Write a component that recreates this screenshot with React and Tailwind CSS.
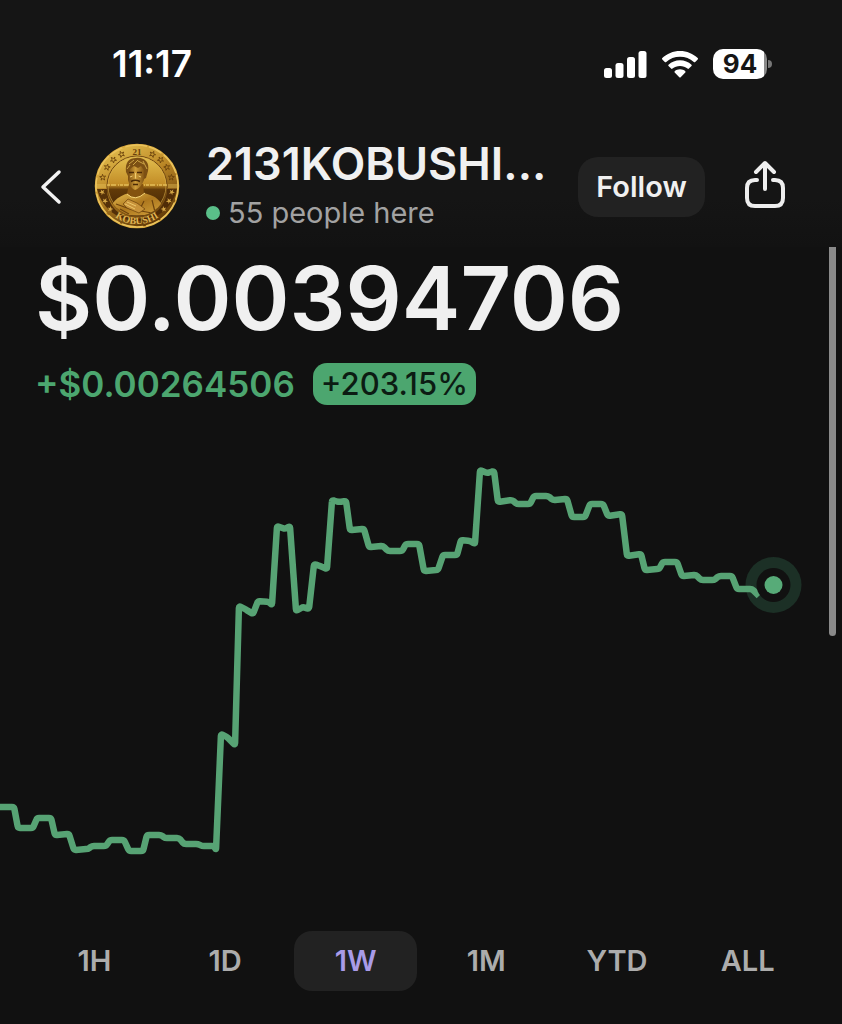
import React, { useState } from 'react';

const RANGES = ['1H', '1D', '1W', '1M', 'YTD', 'ALL'];

const POINTS = [
  [0, 807], [14, 807], [18, 828], [33, 828], [37, 818], [51, 818], [55, 835], [69, 834],
  [74, 850], [88, 849], [92, 846], [106, 846], [110, 840], [124, 840], [129, 851], [143, 851],
  [147, 835], [161, 835], [165, 838], [179, 838], [184, 844], [198, 844], [202, 846], [214, 846],
  [216, 850], [221, 734], [227, 737], [235, 745], [239, 606], [245, 609], [253, 614], [258, 601],
  [269, 602], [272, 605], [277, 526], [285, 529], [290, 526], [296, 611], [303, 607], [309, 609],
  [314, 564], [320, 566], [327, 569], [332, 500], [339, 502], [346, 501], [350, 530], [364, 529],
  [369, 547], [383, 546], [388, 551], [402, 551], [406, 544], [419, 544], [424, 571], [438, 570],
  [443, 555], [457, 555], [461, 540], [470, 541], [475, 544], [480, 470], [487, 473], [494, 471],
  [498, 502], [512, 500], [517, 504], [530, 504], [534, 496], [548, 496], [553, 500], [567, 499],
  [572, 517], [585, 517], [590, 504], [603, 504], [608, 516], [622, 514], [627, 556], [641, 554],
  [645, 570], [659, 569], [663, 562], [677, 562], [682, 576], [696, 575], [701, 580], [714, 580],
  [719, 576], [732, 576], [737, 589], [752, 589], [759, 596]
];

// Turns each corner into a short curve
const buildPath = (points, radius) => {
  const toward = ([x1, y1], [x2, y2]) => {
    const length = Math.hypot(x2 - x1, y2 - y1);
    const t = Math.min(radius, length / 2) / length;
    return `${(x1 + (x2 - x1) * t).toFixed(1)} ${(y1 + (y2 - y1) * t).toFixed(1)}`;
  };
  let d = `M${points[0].join(' ')}`;
  for (let i = 1; i < points.length - 1; i++) {
    d += `L${toward(points[i], points[i - 1])}Q${points[i].join(' ')} ${toward(points[i], points[i + 1])}`;
  }
  return `${d}L${points[points.length - 1].join(' ')}`;
};

const StatusBar = () => (
  <div className="flex h-32 items-center justify-between pl-[112px] pr-[70px]">
    <time className="text-[37px] leading-10 font-semibold text-white">11:17</time>
    <div className="flex items-center gap-[15px]">
      <svg width="43" height="27" viewBox="0 0 43 27" fill="#fff" aria-hidden="true">
        <rect x="0" y="17" width="8" height="10" rx="2.5" />
        <rect x="11.5" y="12" width="8" height="15" rx="2.5" />
        <rect x="23" y="6" width="8" height="21" rx="2.5" />
        <rect x="34.5" y="0" width="8" height="27" rx="2.5" />
      </svg>
      <svg width="36" height="27" viewBox="0 0 36 27" fill="#fff" aria-hidden="true">
        <path d="M18 0C24.900 0 31.200 2.700 35.700 7.100C36.100 7.500 36.100 8.100 35.700 8.500L33.200 11C32.800 11.400 32.200 11.400 31.800 11C28.100 7.600 23.300 5.700 18 5.700S7.900 7.600 4.200 11C3.800 11.400 3.200 11.400 2.800 11L.3 8.500C-.1 8.100-.1 7.500.3 7.100C4.800 2.700 11.100 0 18 0Z" />
        <path d="M18 9.300C22.400 9.300 26.500 11 29.500 13.700C29.900 14.100 29.900 14.700 29.500 15.100L26.900 17.600C26.500 18 25.900 18 25.500 17.600C23.500 15.900 20.900 14.900 18 14.900S12.500 15.900 10.500 17.600C10.100 18 9.500 18 9.100 17.600L6.500 15.100C6.100 14.700 6.100 14.100 6.500 13.700C9.500 11 13.600 9.300 18 9.300Z" />
        <path d="M18 18.300C20.100 18.300 21.900 19 23.300 20.200C23.700 20.600 23.700 21.200 23.300 21.600L18.700 26.300C18.300 26.700 17.700 26.700 17.300 26.300L12.700 21.600C12.300 21.200 12.300 20.600 12.700 20.200C14.100 19 15.900 18.300 18 18.300Z" />
      </svg>
      <div className="flex items-center gap-px">
        <div className="flex h-[30px] w-[54px] items-center justify-center rounded-[10px] bg-linear-to-r from-white from-94% to-[#8a8a8a] to-94% text-[26px] leading-[30px] font-bold text-[#151515]">
          94
        </div>
        <div className="h-2 w-1 rounded-r-full bg-[#777]" />
      </div>
    </div>
  </div>
);

const Coin = () => (
  <svg className="shrink-0" width="86" height="86" viewBox="0 0 86 86" role="img" aria-label="Kobushi coin">
    <defs>
      <linearGradient id="gold" x1="0.2" y1="0" x2="0.7" y2="1">
        <stop offset="0" stopColor="#e5c04f" />
        <stop offset="0.45" stopColor="#b98525" />
        <stop offset="1" stopColor="#5a3406" />
      </linearGradient>
      <linearGradient id="field" x1="0" y1="0" x2="0" y2="1">
        <stop offset="0" stopColor="#e3c050" />
        <stop offset="0.48" stopColor="#c28c26" />
        <stop offset="0.56" stopColor="#623a08" />
        <stop offset="1" stopColor="#3d2105" />
      </linearGradient>
      <linearGradient id="shirt" x1="0" y1="0" x2="1" y2="1">
        <stop offset="0" stopColor="#e8c052" />
        <stop offset="0.5" stopColor="#ad771e" />
        <stop offset="1" stopColor="#d2a23c" />
      </linearGradient>
      <linearGradient id="skin" x1="0" y1="0" x2="1" y2="0">
        <stop offset="0" stopColor="#7a4d10" />
        <stop offset="0.45" stopColor="#cf9d3a" />
        <stop offset="1" stopColor="#7a4d10" />
      </linearGradient>
      <path id="legend" d="M10 62A38 38 0 0 0 76 62" />
      <clipPath id="face">
        <circle cx="43" cy="43" r="30" />
      </clipPath>
    </defs>
    <circle cx="43" cy="43" r="41.500" fill="url(#gold)" stroke="#d9a73a" strokeWidth="1.500" />
    <path d="M3 46A41 41 0 0 0 83 46L73 46A30 30 0 0 1 13 46Z" fill="#4b2907" opacity="0.9" />
    <circle cx="43" cy="43" r="41" fill="none" stroke="#eac35c" strokeWidth="1.500" strokeDasharray="14 3 22 2" />
    <circle cx="43" cy="43" r="30" fill="url(#field)" stroke="#704711" strokeWidth="1" />
    <circle cx="43" cy="43" r="29" fill="none" stroke="#d9ad48" strokeWidth="0.600" />
    <path d="M2 42H12M2 44H12M74 42H84M74 44H84" stroke="#e8c45c" strokeWidth="0.800" />
    <g clipPath="url(#face)">
      <path d="M13 42H73" stroke="#e3bd58" strokeWidth="1.500" strokeDasharray="3 1 5 2 1 1" />
      <path d="M16 72C16 60 22 54 35 50L49 50C63 53 69 58 70 72Z" fill="url(#shirt)" />
      <path d="M35 41L33 51Q41 58 50 51L49 41Z" fill="#84530f" />
      <path d="M33 51Q41 59 51 50" fill="none" stroke="#f6d678" strokeWidth="1" />
      <path d="M22 61L36 66L58 70M26 66L35 71M58 57L61 69M50 58L47 64" fill="none" stroke="#6d430d" strokeWidth="1.200" />
      <path d="M29 61L34 56L43 60L51 66L45 70L33 65Z" fill="#c8933a" stroke="#6c420b" strokeWidth="0.700" />
      <path d="M33 59L42 63M31 61L41 66" stroke="#f6d678" strokeWidth="0.800" />
    </g>
    <path d="M34 25Q36 19 43 19Q50 20 51 27L50 37Q47 45 41 47Q36 45 34 37Z" fill="url(#skin)" />
    <path d="M32 29C31 19 35 15 42 15C50 14 56 19 54 28L52 35L50 36L50 27L47 23L44 25L40 23L36 26L34 33Z" fill="#7c5014" />
    <path d="M35 21L40 17M39 22L44 17M44 18L50 21M49 18L53 26M33 26L36 22" stroke="#dfb851" strokeWidth="0.800" />
    <path d="M35 29.500H40M43 29.500H48" stroke="#4b2a06" strokeWidth="1.600" />
    <path d="M37 38.500Q41 36 46 38.500M39 41.500H44" fill="none" stroke="#4b2a06" strokeWidth="1.500" />
    <path d="M41.500 30V35.500M36 34L38.500 33M44.500 33L47 34" stroke="#f0cd70" strokeWidth="1" />
    <text x="43" y="12" textAnchor="middle" fontSize="9" fill="#6a410b" fontWeight="700" className="font-['Liberation_Serif',serif]">21</text>
    <g fill="none" stroke="#6a410b" strokeWidth="0.800">
      {[-76, -58, -42, -26, 26, 42, 58, 76].map(angle => (
        <path key={angle} d="M43 4.500L43.800 6.700H46L44.200 8L45 10.200L43 8.900L41 10.200L41.800 8L40 6.700H42.200Z" transform={`rotate(${angle} 43 43)`} />
      ))}
    </g>
    <g fill="#d2a444">
      {[-131, -115, -100, 100, 115, 131].map(angle => (
        <path key={angle} d="M43 4.500L43.800 6.700H46L44.200 8L45 10.200L43 8.900L41 10.200L41.800 8L40 6.700H42.200Z" transform={`rotate(${angle} 43 43)`} />
      ))}
    </g>
    <text fontSize="10" fill="#dfb352" fontWeight="700" textAnchor="middle" className="font-['Liberation_Serif',serif]">
      <textPath href="#legend" startOffset="50%">KOBUSHI</textPath>
    </text>
  </svg>
);

const TokenHeader = () => {
  const [following, setFollowing] = useState(false);

  return (
    <div className="flex h-[119px] items-start pl-[39px] pr-[55px]">
      <button type="button" aria-label="Back" className="mt-10 mr-[31px] shrink-0">
        <svg width="24" height="38" viewBox="0 0 24 38" fill="none" stroke="#f2f2f2" strokeWidth="3.500" strokeLinecap="round" strokeLinejoin="round">
          <path d="M20 4L4 19L20 34" />
        </svg>
      </button>
      <div className="mt-[15px] shrink-0">
        <Coin />
      </div>
      <div className="ml-[26px] min-w-0 flex-1 pt-2">
        <h1 className="text-[45px] leading-[56px] font-semibold whitespace-nowrap text-[#f0f0f0]">2131KOBUSHI...</h1>
        <div className="flex items-center gap-2 leading-[42px]">
          <span className="size-[14px] rounded-full bg-[#5abf89]" />
          <span className="text-[29px] whitespace-nowrap text-[#a2a2a2]">55 people here</span>
        </div>
      </div>
      <button
        type="button"
        onClick={() => setFollowing(!following)}
        className="mt-[29px] h-[60px] w-[127px] shrink-0 rounded-[20px] bg-[#222] text-[29px] font-semibold text-[#f0f0f0]"
      >
        {following ? 'Following' : 'Follow'}
      </button>
      <button type="button" aria-label="Share" className="mt-8 ml-[38px] shrink-0">
        <svg width="44" height="52" viewBox="0 0 44 52" fill="none" stroke="#eee" strokeWidth="4" strokeLinecap="round" strokeLinejoin="round">
          <path d="M14 20H12Q4 20 4 28V38Q4 46 12 46H32Q40 46 40 38V28Q40 20 32 20H30" />
          <path d="M22 29V4M13 12L22 3L31 12" />
        </svg>
      </button>
    </div>
  );
};

const PriceChart = () => (
  <svg className="block w-full" viewBox="0 440 842 440" fill="none" role="img" aria-label="Price over one week">
    <circle cx="773.500" cy="585" r="28" fill="#1c3026" />
    <path d={buildPath(POINTS, 2)} stroke="#57a374" strokeWidth="6.500" strokeLinejoin="round" />
    <circle cx="773.500" cy="585" r="17" fill="#111" />
    <circle cx="773.500" cy="585" r="9" fill="#57ab78" />
  </svg>
);

const App = () => {
  const [range, setRange] = useState('1W');

  return (
    <div className="min-h-screen bg-[#111] font-['Inter',sans-serif]">
      <header className="bg-linear-to-b from-[#151515] from-80% to-[#121212]">
        <StatusBar />
        <TokenHeader />
      </header>

      <main className="relative">
        <section className="px-[35px] pt-[3px]">
          <p className="text-[88px] leading-[96px] font-semibold text-[#f0f0f0]">$0.00394706</p>
          <div className="mt-[17px] flex items-center gap-[18px]">
            <span className="text-[35px] leading-[42px] font-semibold text-[#4ca66f]">+$0.00264506</span>
            <span className="rounded-[14px] bg-[#4ca66f] px-2 text-[31px] leading-[42px] font-medium text-[#0c1c13]">+203.15%</span>
          </div>
        </section>

        <div className="pt-[35px]">
          <PriceChart />
        </div>

        {/* Time ranges */}
        <nav className="mt-[51px] grid grid-cols-6 gap-2 px-[33px] pb-[33px]">
          {RANGES.map(item => (
            <button
              key={item}
              type="button"
              aria-pressed={range === item}
              onClick={() => setRange(item)}
              className={`h-[60px] rounded-[18px] text-[29px] font-semibold ${range === item ? 'bg-[#222] text-[#a99be8]' : 'text-[#acacac]'}`}
            >
              {item}
            </button>
          ))}
        </nav>

        {/* Scroll indicator */}
        <div className="absolute top-0 right-[6px] h-[389px] w-[7px] rounded-b-full bg-[#8a8a8a]" />
      </main>
    </div>
  );
};

export default App;
